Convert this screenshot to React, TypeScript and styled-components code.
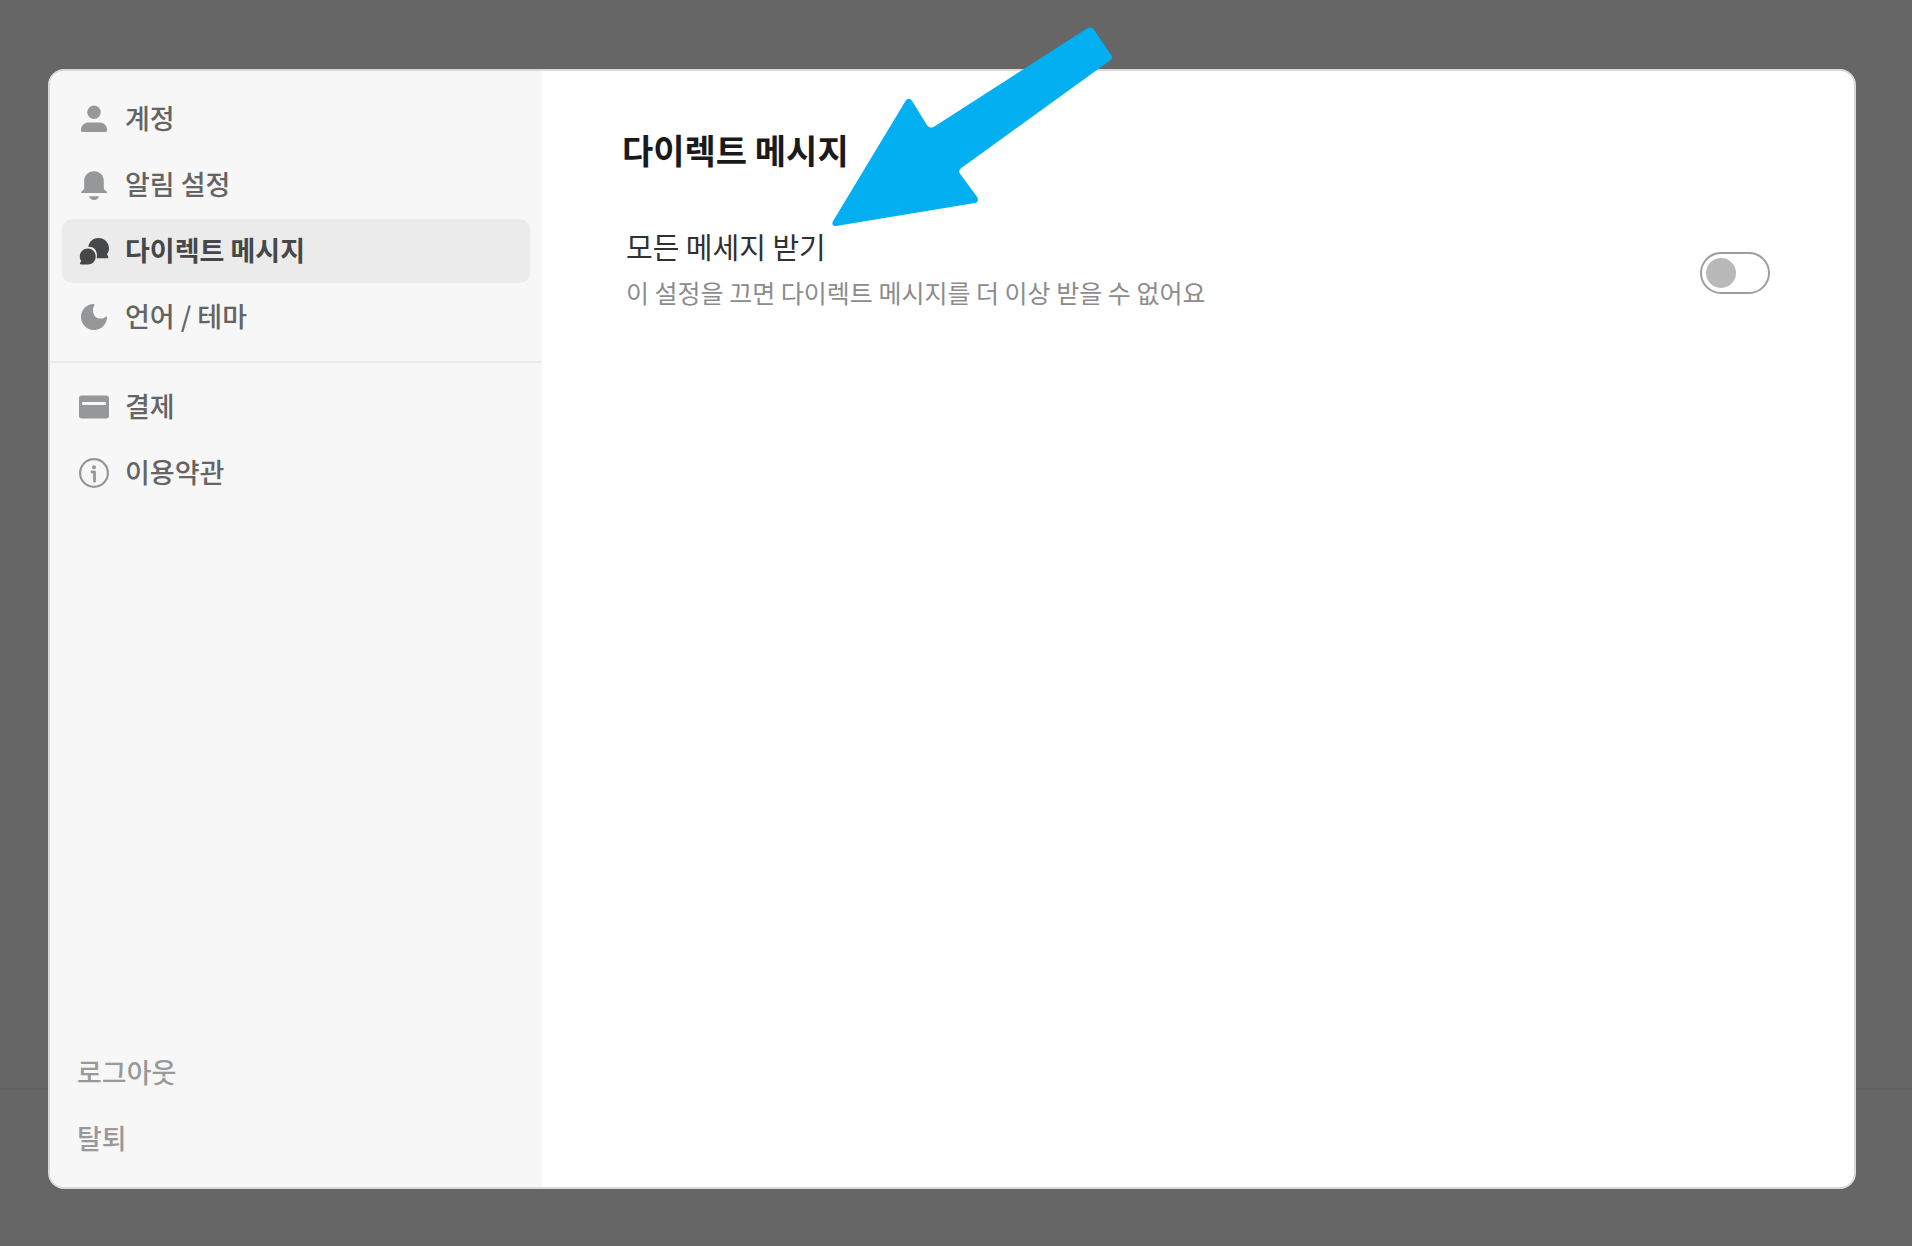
import React, { useState } from "react";
import styled, { createGlobalStyle, css } from "styled-components";

const GlobalStyle = createGlobalStyle`
  *, *::before, *::after { box-sizing: border-box; }
  body {
    margin: 0;
    background: #666666;
    font-family: "Noto Sans CJK KR", "Noto Sans", sans-serif;
  }
  button, input { font: inherit; }
`;

const Page = styled.div`
  position: relative;
  display: flex;
  min-height: 100vh;
  padding: 69px 56px 57px 48px;
`;

const PageBehind = styled.div`
  position: absolute;
  inset: 0;
  display: flex;
  flex-direction: column;
  justify-content: flex-end;
`;

const PageBehindFooter = styled.div`
  height: 158px;
  border-top: 2px solid #5e5e5e;
`;

const Dialog = styled.section`
  position: relative;
  display: flex;
  flex: 1;
  overflow: hidden;
  border: 2px solid #dadada;
  border-radius: 16px;
  background: #ffffff;
`;

const Sidebar = styled.nav`
  display: flex;
  flex: 0 0 492px;
  flex-direction: column;
  justify-content: space-between;
  padding: 16px 0;
  background: #f7f7f7;
`;

const NavList = styled.ul`
  display: flex;
  flex-direction: column;
  gap: 2px;
  margin: 0;
  padding: 0 12px;
  list-style: none;
`;

const Divider = styled.hr`
  height: 2px;
  margin: 12px 0;
  border: 0;
  background: #ebebeb;
`;

const NavButton = styled.button<{ $active?: boolean; $muted?: boolean }>`
  display: flex;
  align-items: center;
  gap: 16px;
  width: 100%;
  height: 64px;
  padding: 0 15px;
  border: 0;
  border-radius: 10px;
  background: transparent;
  color: #646464;
  font-size: 27px;
  font-weight: 500;
  line-height: 40px;
  text-align: left;
  cursor: pointer;

  svg {
    flex: none;
    color: #969798;
  }

  ${({ $muted }) =>
    $muted &&
    css`
      color: #999999;
    `}

  ${({ $active }) =>
    $active &&
    css`
      background: #ebebeb;
      color: #464748;
      font-weight: 700;

      svg {
        color: #464748;
      }
    `}
`;

const NavText = styled.span`
  padding-bottom: 3px;
`;

const Content = styled.main`
  flex: 1;
  min-width: 0;
  padding: 56px 84px 56px 80px;
`;

const Title = styled.h1`
  margin: 0;
  color: #1a1a1a;
  font-size: 34px;
  font-weight: 700;
  line-height: 46px;
`;

const Setting = styled.div`
  display: flex;
  align-items: center;
  justify-content: space-between;
  gap: 32px;
  margin-top: 53px;
  padding-left: 4px;
`;

const SettingText = styled.div`
  display: flex;
  flex-direction: column;
  gap: 6px;
  padding-bottom: 8px;
`;

const SettingLabel = styled.label`
  color: #303030;
  font-size: 29px;
  line-height: 40px;
`;

const SettingHint = styled.p`
  margin: 0;
  color: #8c8c8c;
  font-size: 25px;
  line-height: 40px;
`;

const Toggle = styled.input`
  display: flex;
  flex: none;
  align-items: center;
  width: 70px;
  height: 42px;
  margin: 0;
  padding: 0 4px;
  appearance: none;
  border: 2px solid #9d9d9d;
  border-radius: 21px;
  background: #ffffff;
  cursor: pointer;

  &::before {
    width: 30px;
    height: 30px;
    border-radius: 50%;
    background: #b9b9b9;
    content: "";
  }

  &:checked {
    justify-content: flex-end;
  }
`;

const Pointer = styled.svg`
  position: absolute;
  top: 10px;
  left: 820px;
  pointer-events: none;
`;

const Icon = ({ children }: { children: React.ReactNode }) => (
  <svg width="32" height="32" viewBox="0 0 32 32" fill="currentColor" aria-hidden="true">
    {children}
  </svg>
);

const PersonIcon = () => (
  <Icon>
    <circle cx="17" cy="9.300" r="6.700" />
    <path d="M4 27C4 22 7.500 19.500 12 19.500H22C26.500 19.500 30 22 30 27C30 28.300 29.600 29 28.500 29H5.500C4.400 29 4 28.300 4 27Z" />
  </Icon>
);

const BellIcon = () => (
  <Icon>
    <path d="M17 2.200C23 2.200 26.800 6.600 26.800 12V18.800C26.800 20 27.200 20.600 28 21.200L29.600 22.400C30.400 23.200 30 24 29 24H5C4 24 3.600 23.200 4.400 22.400L6 21.200C6.800 20.600 7.200 20 7.200 18.800V12C7.200 6.600 11 2.200 17 2.200Z" />
    <path d="M12 27.200H22C21.500 29.600 19.500 31 17 31C14.500 31 12.500 29.600 12 27.200Z" />
  </Icon>
);

const ChatIcon = () => (
  <Icon>
    <path d="M11.300 11.800C12.300 6.200 16.500 3 21.500 3C27.400 3 32 7.500 32 13.200C32 15.600 31.200 17.500 30 19.100L31.200 21.800C31.600 22.800 31.200 23.200 30.300 23.200H21C19.900 23.200 19.600 22.900 19.800 21.900C20.600 15.500 17 11.500 11.300 11.800Z" />
    <path d="M10.800 13.400C15.300 13.400 18.700 16.900 18.700 21.400C18.700 25.900 15.300 29.400 10.800 29.400H4C3 29.400 2.700 28.900 3.100 28.100L4.200 25.900C3.300 24.600 2.800 23.100 2.800 21.400C2.800 16.900 6.300 13.400 10.800 13.400Z" />
  </Icon>
);

const MoonIcon = () => (
  <Icon>
    <path d="M16.700 3.100C17.400 3 17.700 3.500 17.300 4.200C14.300 10 16.500 17.300 23 17.600C25.200 17.700 27.200 16.900 28.800 15.700C29.600 15.100 30.200 15.400 30.100 16.400C29.600 23.400 24 29 17 29C9.800 29 4 23.200 4 16C4 8.900 9.600 3.200 16.700 3.100Z" />
  </Icon>
);

const CardIcon = () => (
  <Icon>
    <path
      fillRule="evenodd"
      d="M4.500 4.500H29.500C31 4.500 32 5.500 32 7V25C32 26.500 31 27.500 29.500 27.500H4.500C3 27.500 2 26.500 2 25V7C2 5.500 3 4.500 4.500 4.500ZM5.200 11V14H28.800V11Z"
    />
  </Icon>
);

const InfoIcon = () => (
  <Icon>
    <circle cx="17" cy="16" r="13.900" fill="none" stroke="currentColor" strokeWidth="2.200" />
    <circle cx="17" cy="10.200" r="2" />
    <path
      d="M15 15H17.500V24.300"
      fill="none"
      stroke="currentColor"
      strokeWidth="2.800"
      strokeLinecap="round"
      strokeLinejoin="round"
    />
  </Icon>
);

const mainItems = [
  { label: "계정", icon: <PersonIcon /> },
  { label: "알림 설정", icon: <BellIcon /> },
  { label: "다이렉트 메시지", icon: <ChatIcon />, active: true },
  { label: "언어 / 테마", icon: <MoonIcon /> },
];

const extraItems = [
  { label: "결제", icon: <CardIcon /> },
  { label: "이용약관", icon: <InfoIcon /> },
];

export default function App() {
  const [receiveAll, setReceiveAll] = useState(false);

  return (
    <>
      <GlobalStyle />
      <Page>
        <PageBehind>
          <PageBehindFooter />
        </PageBehind>
        <Dialog role="dialog" aria-labelledby="settings-title">
          <Sidebar>
            <div>
              <NavList>
                {mainItems.map(({ label, icon, active }) => (
                  <li key={label}>
                    <NavButton type="button" $active={active} aria-current={active ? "page" : undefined}>
                      {icon}
                      <NavText>{label}</NavText>
                    </NavButton>
                  </li>
                ))}
              </NavList>
              <Divider />
              <NavList>
                {extraItems.map(({ label, icon }) => (
                  <li key={label}>
                    <NavButton type="button">
                      {icon}
                      <NavText>{label}</NavText>
                    </NavButton>
                  </li>
                ))}
              </NavList>
            </div>
            <NavList>
              {["로그아웃", "탈퇴"].map((label) => (
                <li key={label}>
                  <NavButton type="button" $muted>
                    <NavText>{label}</NavText>
                  </NavButton>
                </li>
              ))}
            </NavList>
          </Sidebar>
          <Content>
            <Title id="settings-title">다이렉트 메시지</Title>
            <Setting>
              <SettingText>
                <SettingLabel htmlFor="receive-all">모든 메세지 받기</SettingLabel>
                <SettingHint id="receive-all-hint">
                  이 설정을 끄면 다이렉트 메시지를 더 이상 받을 수 없어요
                </SettingHint>
              </SettingText>
              <Toggle
                id="receive-all"
                type="checkbox"
                role="switch"
                aria-describedby="receive-all-hint"
                checked={receiveAll}
                onChange={(event) => setReceiveAll(event.target.checked)}
              />
            </Setting>
          </Content>
        </Dialog>
        <Pointer width="310" height="230" viewBox="0 0 930 690" aria-hidden="true">
          <path
            fill="#02aff0"
            d="M38 635L257 272Q266 261 276 272L321 346Q329 357 342 350L803 54Q813 48 820 56L874 136Q879 144 871 151L424 474Q413 482 421 493L472 562Q478 576 465 579L48 648Q34 648 38 635Z"
          />
        </Pointer>
      </Page>
    </>
  );
}
